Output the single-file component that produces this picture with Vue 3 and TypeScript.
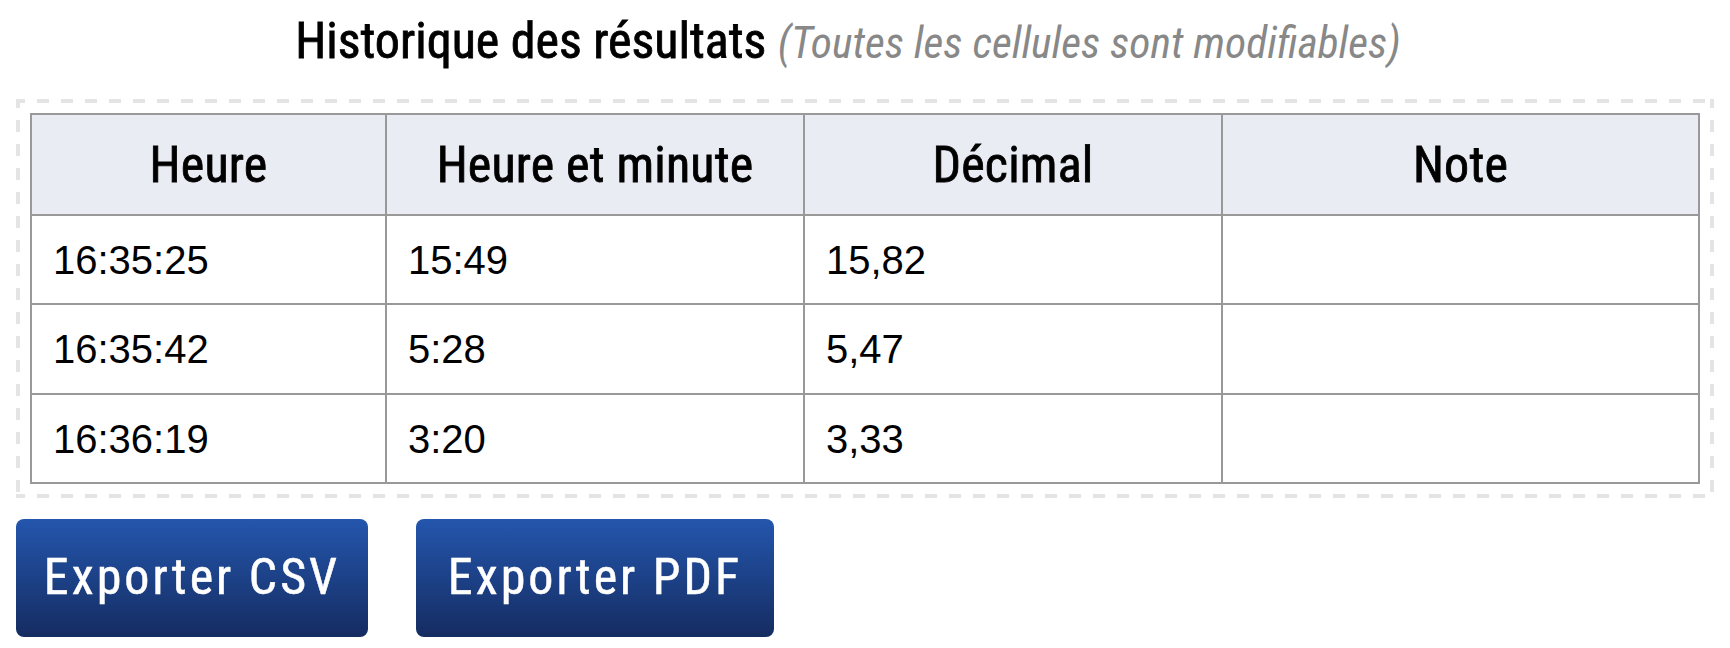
<script setup lang="ts">
interface Row { time: string; hm: string; dec: string; note: string }
const columns: string[] = ['Heure', 'Heure et minute', 'Décimal', 'Note']
const rows: Row[] = [
  { time: '16:35:25', hm: '15:49', dec: '15,82', note: '' },
  { time: '16:35:42', hm: '5:28', dec: '5,47', note: '' },
  { time: '16:36:19', hm: '3:20', dec: '3,33', note: '' },
]
</script>

<template>
  <main class="page">
    <h2 class="title">Historique des résultats <em class="hint">(Toutes les cellules sont modifiables)</em></h2>
    <section class="box">
      <table class="grid">
        <colgroup>
          <col class="c1" /><col class="c2" /><col class="c2" /><col class="c4" />
        </colgroup>
        <thead>
          <tr><th v-for="c in columns" :key="c">{{ c }}</th></tr>
        </thead>
        <tbody>
          <tr v-for="r in rows" :key="r.time">
            <td>{{ r.time }}</td>
            <td>{{ r.hm }}</td>
            <td>{{ r.dec }}</td>
            <td>{{ r.note }}</td>
          </tr>
        </tbody>
      </table>
    </section>
    <div class="actions">
      <button class="btn btn-csv">Exporter CSV</button>
      <button class="btn btn-pdf">Exporter PDF</button>
    </div>
  </main>
</template>

<style>
html, body { margin: 0; background: #fff; }
</style>

<style scoped>
.page {
  width: 1698px;
  padding-left: 16px;
  font-family: "Liberation Sans", Arial, sans-serif;
}
.title {
  margin: 0;
  height: 99px;
  padding-right: 34px;
  box-sizing: border-box;
  text-align: center;
  font-family: "Roboto Condensed", "Liberation Sans Narrow", "Liberation Sans", sans-serif;
  font-size: 50px;
  line-height: 82px;
  font-weight: 400;
  -webkit-text-stroke: 0.8px #000;
  color: #000;
  white-space: nowrap;
}
.hint {
  font-size: 43.5px;
  font-style: italic;
  font-weight: 400;
  -webkit-text-stroke: 0;
  color: #888;
}
.box {
  box-sizing: border-box;
  width: 1698px;
  padding: 14px;
  background-color: #fff;
  background-image:
    linear-gradient(90deg, #e4e4e4 50%, transparent 50%),
    linear-gradient(90deg, #e4e4e4 50%, transparent 50%),
    linear-gradient(180deg, #e4e4e4 50%, transparent 50%),
    linear-gradient(180deg, #e4e4e4 50%, transparent 50%);
  background-size: 24px 4px, 24px 4px, 4px 24px, 4px 24px;
  background-position: -3px 0, -3px 100%, 0 -3px, 100% -3px;
  background-repeat: repeat-x, repeat-x, repeat-y, repeat-y;
}
.grid {
  width: 1670px;
  table-layout: fixed;
  border-collapse: collapse;
}
.c1 { width: 355px; }
.c2 { width: 418px; }
.c4 { width: 477px; }
th, td {
  border: 2px solid #999;
  box-sizing: border-box;
}
th {
  height: 101px;
  background: #e9edf3;
  color: #000;
  font-family: "Roboto Condensed", "Liberation Sans Narrow", "Liberation Sans", sans-serif;
  font-size: 50px;
  font-weight: 400;
  letter-spacing: 0.2px;
  -webkit-text-stroke: 0.8px #000;
  text-align: center;
}
td {
  height: 89px;
  padding: 2px 21px 0;
  font-size: 40px;
  color: #000;
}
tbody tr:nth-child(2) td {
  height: 90px;
  padding-top: 1px;
}
.actions {
  display: flex;
  gap: 48px;
  margin-top: 21px;
}
.btn {
  height: 118px;
  padding: 0 0 2px;
  border: 0;
  border-radius: 8px;
  background: linear-gradient(180deg, #2456ad 0%, #152c61 100%);
  color: #fff;
  font-family: "Roboto Condensed", "Liberation Sans Narrow", "Liberation Sans", sans-serif;
  font-size: 50px;
  font-weight: 400;
  letter-spacing: 3px;
  -webkit-text-stroke: 0.5px #fff;
  white-space: nowrap;
}
.btn-csv { width: 352px; }
.btn-pdf { width: 358px; }
</style>
